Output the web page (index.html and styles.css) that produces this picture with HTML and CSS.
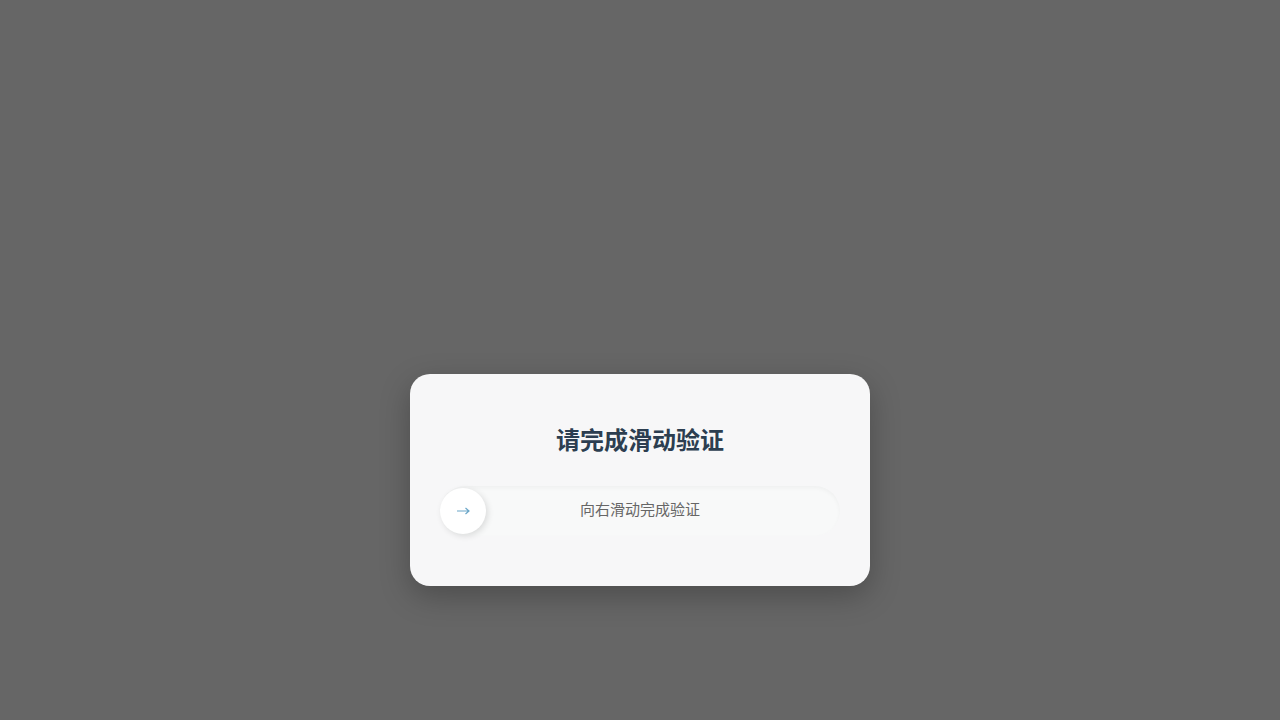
FILE: index.html
```html
<!DOCTYPE html>
<html lang="zh-CN">
<head>
    <meta charset="UTF-8">
    <meta name="viewport" content="width=device-width, initial-scale=1.0">
    <title>滑动验证</title>
    <link rel="stylesheet" href="styles.css">
</head>
<body>
    <div class="overlay">
        <div class="verify-card">
            <h2>请完成滑动验证</h2>
            <div class="slider-track">
                <div class="slider-text">向右滑动完成验证</div>
                <div class="slider-knob">
                    <svg width="14" height="10" viewBox="0 0 14 10">
                        <path d="M1 5 H13 M9.5 2 L13 5 L9.5 8" fill="none" stroke="#6aa6c8" stroke-width="1.2"/>
                    </svg>
                </div>
            </div>
        </div>
    </div>
</body>
</html>
```

FILE: styles.css
```css
* {
    margin: 0;
    padding: 0;
    box-sizing: border-box;
}

body {
    font-family: "Liberation Sans", Arial, "Noto Sans CJK SC", sans-serif;
    background: #666666;
    min-height: 100vh;
}

.overlay {
    display: flex;
    justify-content: center;
    padding-top: 374px;
}

.verify-card {
    width: 460px;
    background: #f7f7f8;
    border-radius: 20px;
    padding: 50px 30px;
    box-shadow: 0 10px 30px rgba(0,0,0,0.25);
}

.verify-card h2 {
    text-align: center;
    font-size: 24px;
    line-height: 30px;
    font-weight: bold;
    color: #2c3e50;
    padding-top: 2px;
    margin-bottom: 30px;
}

/* Slider */
.slider-track {
    position: relative;
    height: 50px;
    border-radius: 25px;
    background: #f8f9f9;
    box-shadow: inset 0 2px 4px rgba(0,0,0,0.04);
    display: flex;
    align-items: center;
    justify-content: center;
}

.slider-text {
    font-size: 15px;
    line-height: 20px;
    margin-top: -2px;
    color: #666;
}

.slider-knob {
    position: absolute;
    left: 0;
    top: 2px;
    width: 46px;
    height: 46px;
    border-radius: 50%;
    background: #ffffff;
    box-shadow: 2px 2px 6px rgba(0,0,0,0.12);
    display: flex;
    align-items: center;
    justify-content: center;
    cursor: pointer;
}

.slider-knob svg {
    display: block;
    margin-top: -1px;
}
```
